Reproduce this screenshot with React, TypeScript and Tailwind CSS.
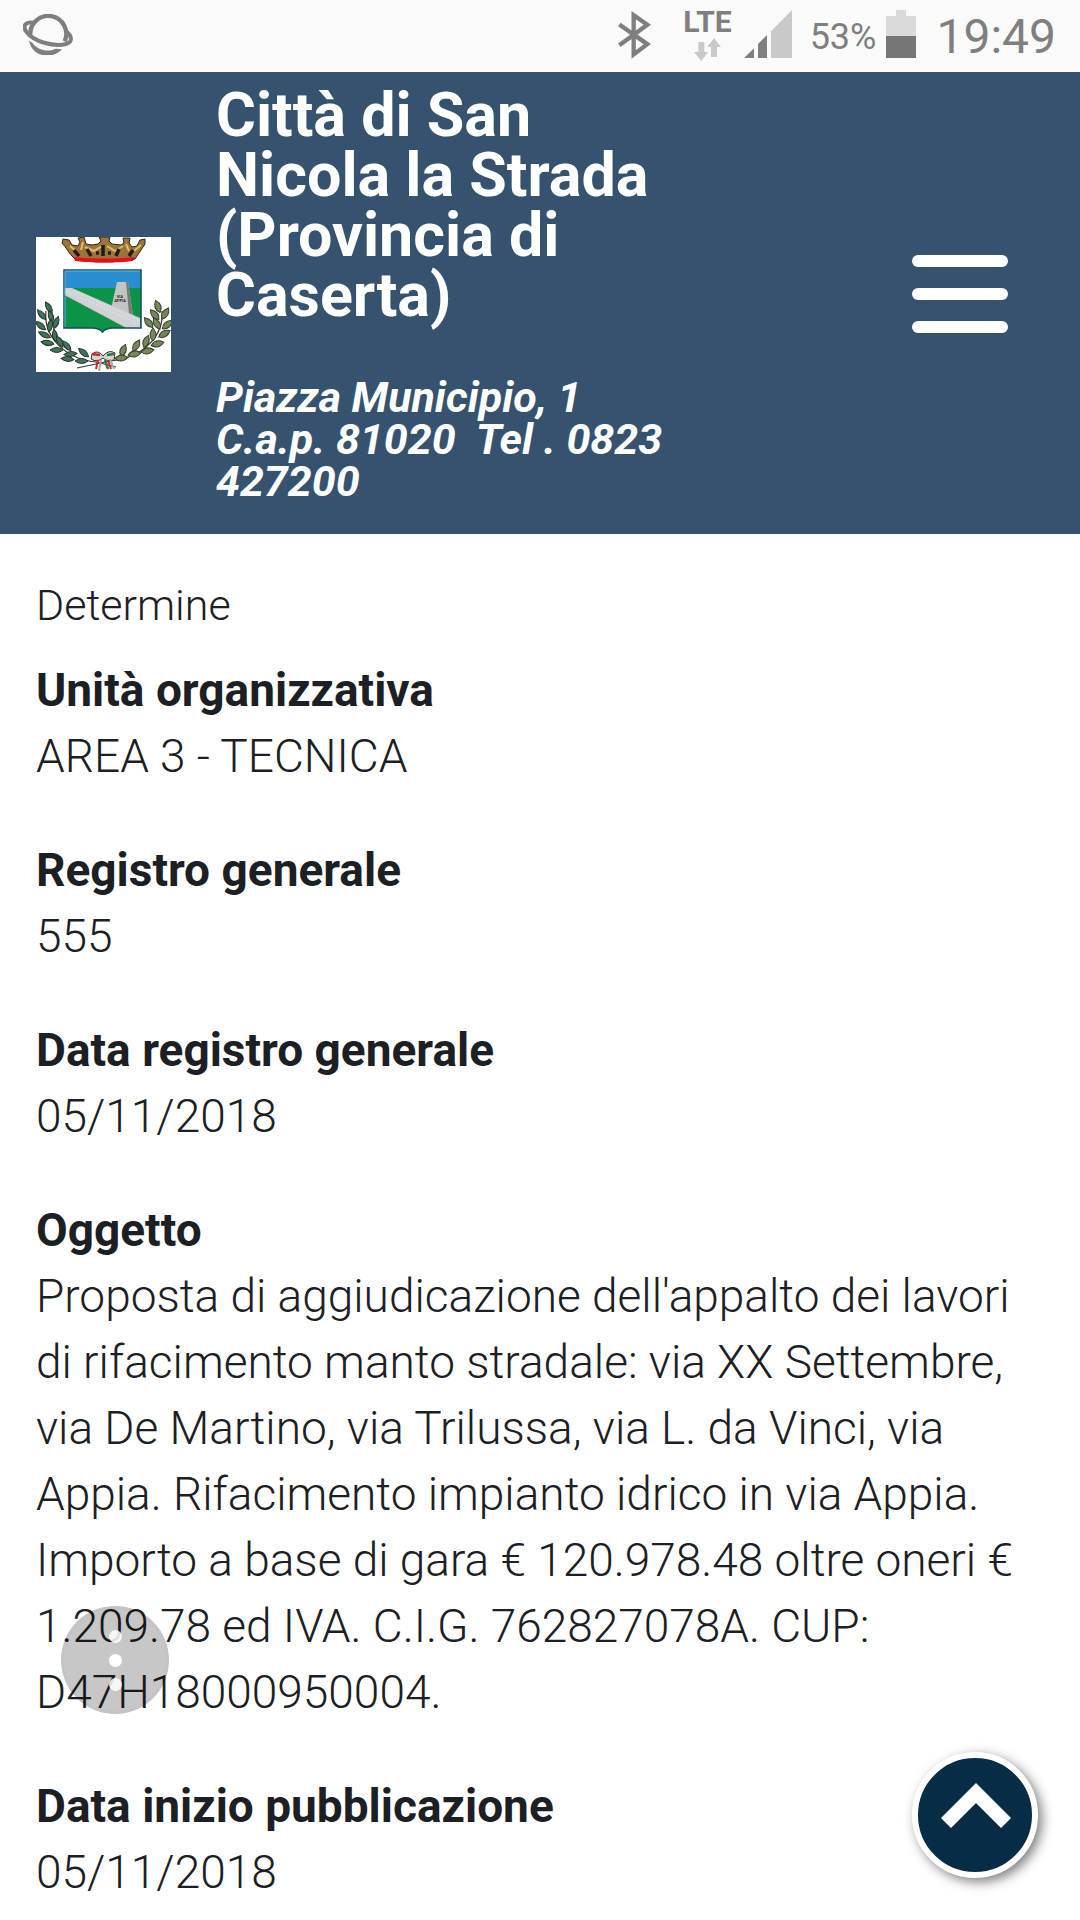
interface Field {
  label: string;
  value: string;
}

const fields: Field[] = [
  { label: "Unità organizzativa", value: "AREA 3 - TECNICA" },
  { label: "Registro generale", value: "555" },
  { label: "Data registro generale", value: "05/11/2018" },
  {
    label: "Oggetto",
    value:
      "Proposta di aggiudicazione dell'appalto dei lavori di rifacimento manto stradale: via XX Settembre, via De Martino, via Trilussa, via L. da Vinci, via Appia. Rifacimento impianto idrico in via Appia. Importo a base di gara € 120.978.48 oltre oneri € 1.209.78 ed IVA. C.I.G. 762827078A. CUP: D47H18000950004.",
  },
  { label: "Data inizio pubblicazione", value: "05/11/2018" },
];

/** Android status bar: browser icon on the left, system icons on the right. */
function StatusBar() {
  return (
    <div className="flex h-[72px] items-center justify-between bg-[#fafafa] pr-6 pl-[23px] text-[#7f7f7f]">
      <svg viewBox="0 0 150 123" className="mb-1 h-[41px] w-[50px]" fill="none" stroke="currentColor">
        <path d="M22 64A54 54 0 1 1 125 82" strokeWidth="13" />
        <path d="M32 26C8 22 -3 36 10 53C32 83 92 99 129 90C150 84 148 66 127 50" strokeWidth="12" />
        <path d="M18 80C28 130 88 138 117 106L98 104C72 117 42 106 28 86Z" fill="currentColor" stroke="none" />
      </svg>
      <div className="flex items-center">
        <svg viewBox="50 28 108 152" className="mb-1 h-[51px] w-9" fill="none" stroke="currentColor" strokeWidth="13">
          <path d="M57 74L141 133L100 164V46L141 75L57 136" />
        </svg>
        <div className="mb-0.5 ml-[30px] flex flex-col items-center gap-1">
          <span className="text-[30px] leading-[24px] font-bold">LTE</span>
          <svg viewBox="291 114 81 69" className="h-[23px] w-[27px]" fill="#c9c9c9">
            <path d="M304 126H322V156H333L313 183L291 156H304Z" />
            <path d="M351 114L372 141H360V171H342V141H331Z" />
          </svg>
        </div>
        <svg viewBox="435 33 144 144" className="mb-1 ml-3 h-12 w-12" fill="currentColor">
          <path d="M435 177H465V148Z" />
          <path d="M477 177V135L504 108V177Z" />
          <path d="M516 177V97L579 33V177Z" fill="#c9c9c9" />
        </svg>
        <span className="mt-0.5 ml-[18px] text-[36px] leading-[48px]">53%</span>
        <svg viewBox="0 0 30 48" className="mr-5 mb-1 ml-2.5 h-12 w-[30px]">
          <path d="M10 0H20V6H30V26H0V6H10Z" fill="#dadada" />
          <path d="M0 26H30V48H0Z" fill="#767676" />
        </svg>
        <span className="mt-0.5 text-[48px] leading-[48px]">19:49</span>
      </div>
    </div>
  );
}

// x, y, rotation of every leaf in the left branch
const leftLeaves = [
  [13, 71, 60], [6, 78, 50], [15, 80, 75], [5, 89, 40], [14, 89, 100], [20, 86, 110],
  [9, 98, 25], [19, 99, 80], [12, 106, 10], [24, 105, 60], [21, 113, 0], [31, 109, 50],
  [35, 117, -5], [32, 122, 5], [48, 116, 40], [46, 124, 0],
];

const rightLeaves = [
  [122, 70, 70], [119, 78, 50], [129, 77, 120], [131, 88, 140], [121, 87, 60], [113, 86, 50],
  [128, 97, 150], [117, 98, 90], [121, 107, 165], [110, 105, 110], [111, 114, 170], [100, 109, 120],
  [98, 117, 170], [87, 114, 110], [85, 121, 175],
];

/** Municipal coat of arms. */
function Crest() {
  return (
    <svg viewBox="0 0 135 135" role="img" aria-label="Stemma del Comune" className="mt-[22px] size-[135px] shrink-0 bg-white">
      <path
        d="M39 22C33 17 30 10 26 6L27 2L33 3L36 8L42 9L44 5L42 1L48 0L50 7L56 8L62 7L65 4L63 0H74L73 4L76 7L85 8L88 6L87 1L94 1L93 6L96 10L101 9L104 3L109 2L109 7L99 22C80 26 56 26 39 22Z"
        fill="#9c743a"
        stroke="#2b2416"
      />
      <path d="M34 9L40 14M47 5L45 13M49 10L58 14L66 9M71 9L79 14L87 9M90 7L93 14M98 14L105 8" fill="none" stroke="#dfba6b" strokeWidth="2" />
      <path d="M38 13L43 19M51 12L55 19M67 8V19M83 12L80 19M97 13L93 19M60 16H63M72 16H75" fill="none" stroke="#211b12" strokeWidth="3.500" />
      <path d="M38 20C55 22 80 22 98 20L97 24C82 26 54 26 39 24Z" fill="#ec0d1b" />
      <path d="M28 33H105V91H77Q70 91 66.500 95Q63 91 56 91H28Z" fill="#0b9447" />
      <path d="M28 33H105V51H28Z" fill="#278fd0" />
      <path d="M81 45H92L97 78L75 72Z" fill="#c2c5c3" />
      <path d="M90 45H92L97 78L93 77Z" fill="#777c79" />
      <path d="M28 51L36 51L104 81V91H90L28 58Z" fill="#d0d3d6" />
      <path d="M28 58L90 91" stroke="#58745f" strokeDasharray="1 1" />
      <path d="M30 54L103 87M38 54L104 84" stroke="#f2f2f2" strokeDasharray="1 2" />
      <path d="M28 33H105V91H77Q70 91 66.500 95Q63 91 56 91H28Z" fill="none" stroke="#154d5c" strokeWidth="1.500" />
      <path d="M29 90V34H104" fill="none" stroke="#5cb7e2" />
      <text x="84" y="61" textAnchor="middle" className="fill-[#222222] text-[4px] font-bold">VIA</text>
      <text x="84" y="65" textAnchor="middle" className="fill-[#222222] text-[4px] font-bold">APPIA</text>
      <path d="M10 74C7 98 28 122 60 125L80 130M126 74C128 98 108 121 74 124L41 131" fill="none" stroke="#3c3425" strokeWidth="1.200" />
      {leftLeaves.map(([x, y, r]) => (
        <path key={`${x}-${y}`} d="M-7 0Q0 -5 6 0Q0 5 -7 0Z" transform={`translate(${x} ${y}) rotate(${r})`} fill="#47705a" stroke="#203b2a" />
      ))}
      {rightLeaves.map(([x, y, r]) => (
        <path key={`${x}-${y}`} d="M-7 0Q0 -6 6 0Q0 6 -7 0Z" transform={`translate(${x} ${y}) rotate(${r})`} fill="#77865c" stroke="#333e27" />
      ))}
      <path d="M56 117Q62 112 67 119Q73 112 79 116L78 123Q71 125 67 121Q61 126 55 122Z" fill="#d5d5cf" stroke="#3d332c" />
      <path d="M56 117L64 118" stroke="#cd2434" strokeWidth="2.500" />
      <path d="M62 123L60 132M72 123L75 132" stroke="#cd2434" strokeWidth="2" />
      <path d="M71 118L78 117M69 123L72 132" stroke="#26774a" strokeWidth="2.500" />
      <path d="M65 123L63 134M74 122L78 132" stroke="#a9aaa5" strokeWidth="2" />
    </svg>
  );
}

function Header() {
  return (
    <header className="flex items-center bg-[#35536f] px-9 pt-[13px] pb-8 font-bold text-white">
      <Crest />
      <div className="ml-[45px] w-[480px]">
        <h1 className="text-[61px] leading-[60px]">Città di San Nicola la Strada (Provincia di Caserta)</h1>
        <address className="mt-[51px] text-[43px] leading-[42px]">
          Piazza Municipio, 1
          <br />
          C.a.p. 81020&nbsp; Tel . 0823 427200
        </address>
      </div>
      <button type="button" aria-label="Apri il menu" className="mr-9 ml-auto flex flex-col gap-[21px]">
        <span className="h-3 w-24 rounded-full bg-white" />
        <span className="h-3 w-24 rounded-full bg-white" />
        <span className="h-3 w-24 rounded-full bg-white" />
      </button>
    </header>
  );
}

export default function App() {
  return (
    <div className="min-h-screen bg-white font-['Roboto',sans-serif] text-[#1c2024]">
      <StatusBar />
      <Header />

      <main className="px-9 pt-[39px]">
        <p className="text-[43px] leading-[64px] font-light">Determine</p>
        <dl className="mt-5 flex flex-col gap-12 text-[46px] leading-[66px]">
          {fields.map((field) => (
            <div key={field.label}>
              <dt className="font-bold">{field.label}</dt>
              <dd className="font-light">{field.value}</dd>
            </div>
          ))}
        </dl>
      </main>

      {/* Floating assistant handle */}
      <button
        type="button"
        aria-label="Altre opzioni"
        className="fixed bottom-[206px] left-[61px] flex size-[108px] flex-col items-center justify-center gap-[11px] rounded-full border-3 border-black/2 bg-black/22"
      >
        <span className="size-[13px] rounded-full bg-white/85" />
        <span className="size-[13px] rounded-full bg-white" />
        <span className="size-[13px] rounded-full bg-white/85" />
      </button>

      {/* Back to top */}
      <a
        href="#"
        aria-label="Torna su"
        className="fixed right-[42px] bottom-[42px] size-[126px] rounded-full border-6 border-white bg-[#072c45] shadow-[4px_4px_12px_rgba(0,0,0,0.5)]"
      >
        <svg viewBox="0 0 114 114" fill="white">
          <path d="M58 25L93 60L83 70L58 45L33 70L23 60Z" />
        </svg>
      </a>
    </div>
  );
}
